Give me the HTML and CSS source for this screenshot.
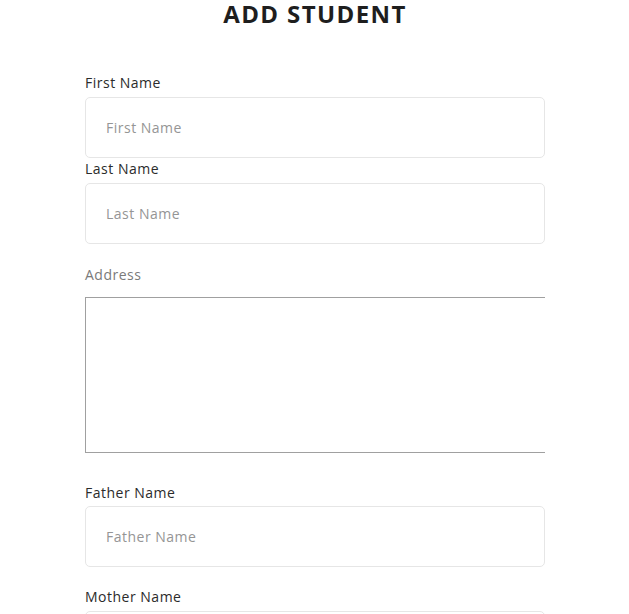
FILE: index.html
```html
<!DOCTYPE html>
<html>
<head>
<meta charset="utf-8">
<link rel="stylesheet" href="styles.css">
</head>
<body>
<div class="page">
  <h1 class="title">ADD STUDENT</h1>
  <form class="form">
    <div class="group group-first">
      <label class="label">First Name</label>
      <input class="input" type="text" placeholder="First Name">
    </div>
    <div class="group group-spaced">
      <label class="label">Last Name</label>
      <input class="input" type="text" placeholder="Last Name">
    </div>
    <div class="group area-group">
      <label class="label label-muted">Address</label>
      <div class="area-clip"><textarea class="area"></textarea></div>
    </div>
    <div class="group group-spaced">
      <label class="label label-tight">Father Name</label>
      <input class="input" type="text" placeholder="Father Name">
    </div>
    <div class="group">
      <label class="label">Mother Name</label>
      <input class="input" type="text" placeholder="Mother Name">
    </div>
  </form>
</div>
</body>
</html>
```

FILE: styles.css
```css
* { box-sizing: border-box; }
html, body { margin: 0; padding: 0; background: #fff; overflow: hidden; }
body {
  font-family: "Open Sans", "Noto Sans", "DejaVu Sans", sans-serif;
  color: #222;
}
.page {
  width: 460px;
  margin-left: 85px;
}
.title {
  margin: 0;
  padding-top: 1px;
  height: 73px;
  text-align: center;
  font-size: 24px;
  font-weight: 700;
  letter-spacing: 1.4px;
  line-height: 26px;
  color: #1e1e1e;
}
.form { display: flex; flex-direction: column; }
.group { display: flex; flex-direction: column; }
.group-first { margin-bottom: 1px; }
.group-spaced { margin-bottom: 20px; }
.label {
  font-size: 14px;
  line-height: 20px;
  letter-spacing: 0.5px;
  color: #2b2b2b;
  margin-bottom: 4px;
}
.label-muted { color: #7a7a7a; margin-bottom: 12px; margin-top: 1px; }
.label-tight { margin-bottom: 3px; }
.input {
  width: 460px;
  height: 61px;
  border: 1px solid #e6e6e6;
  border-radius: 5px;
  padding: 0 20px;
  font-family: inherit;
  font-size: 14px;
  letter-spacing: 0.5px;
  color: #333;
  outline: none;
}
.input::placeholder { color: #959595; }
.area-clip { width: 460px; overflow: hidden; height: 156px; }
.area {
  display: block;
  width: 600px;
  height: 156px;
  border: 1px solid #a0a0a0;
  border-radius: 0;
  resize: none;
  margin: 0;
  padding: 2px;
  font-family: inherit;
}
.area-group { margin-bottom: 30px; }
```
